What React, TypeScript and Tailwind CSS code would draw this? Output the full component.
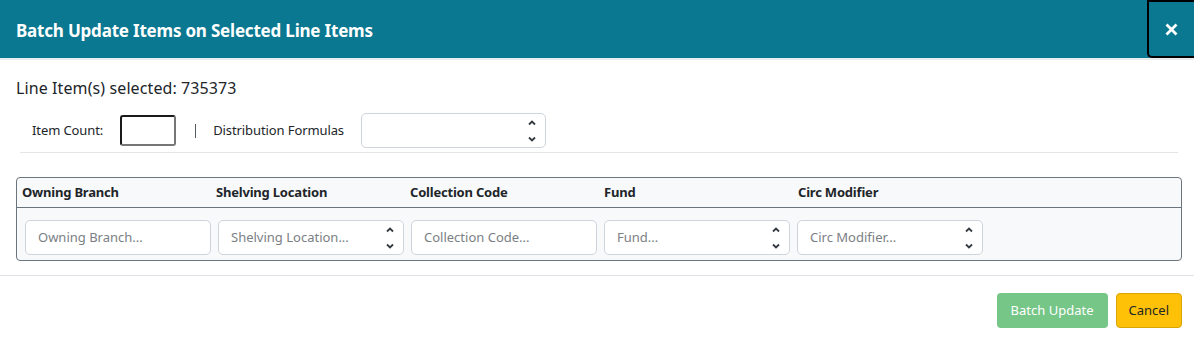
const COLUMNS = [
  { label: "Owning Branch", placeholder: "Owning Branch...", select: false },
  { label: "Shelving Location", placeholder: "Shelving Location...", select: true },
  { label: "Collection Code", placeholder: "Collection Code...", select: false },
  { label: "Fund", placeholder: "Fund...", select: true },
  { label: "Circ Modifier", placeholder: "Circ Modifier...", select: true },
];

function Chevrons() {
  return (
    <svg width="10" height="26" viewBox="0 0 10 26" className="absolute right-[8px] top-1/2 -translate-y-1/2">
      <path d="M2 6.5 L5 3.5 L8 6.5" fill="none" stroke="#343a40" strokeWidth="1.8" />
      <path d="M2 19.5 L5 22.5 L8 19.5" fill="none" stroke="#343a40" strokeWidth="1.8" />
    </svg>
  );
}

function Field({ placeholder, select }: { placeholder: string; select: boolean }) {
  return (
    <div className="relative w-[186px] h-[35px] border border-[#ced4da] rounded-[5px] bg-white flex items-center px-[12px]">
      <span className="text-[13px] text-[#7b8085]">{placeholder}</span>
      {select && <Chevrons />}
    </div>
  );
}

export default function App() {
  return (
    <div className="w-[1194px] h-[341px] bg-white text-[#212529] font-['Noto_Sans',sans-serif] overflow-hidden">
      <div className="h-[60px] bg-[#0a7891] border-b-2 border-[#e9ecef] flex items-start justify-between">
        <h1 className="pl-[16px] pt-[19px] text-[17px] font-bold text-white leading-[24px] tracking-[-0.2px]">
          Batch Update Items on Selected Line Items
        </h1>
        <button className="w-[47px] h-[58px] border-2 border-black border-r-0 rounded-bl-[5px] flex items-center justify-center text-white">
          <svg width="13" height="13" viewBox="0 0 13 13">
            <path d="M1.5 1.5 L11.5 11.5 M11.5 1.5 L1.5 11.5" stroke="white" strokeWidth="2.8" />
          </svg>
        </button>
      </div>

      <div className="px-[16px]">
        <div className="pt-[17px] text-[16px] leading-[22px] tracking-[0.1px]">Line Item(s) selected: 735373</div>
        <div className="flex items-center h-[39px] mt-[12px] pl-[16px] text-[13px] tracking-[-0.1px]">
          <span>Item Count:</span>
          <div className="ml-[17px] w-[56px] h-[31px] rounded-[3px] border-2 border-t-[#1a1a1a] border-l-[#1a1a1a] border-r-[#767676] border-b-[#767676]" />
          <div className="ml-[19px] w-[1px] h-[14px] bg-[#555a5f]" />
          <span className="ml-[17px]">Distribution Formulas</span>
          <div className="relative ml-[17px] w-[185px] h-[35px] border border-[#ced4da] rounded-[5px] bg-white">
            <Chevrons />
          </div>
        </div>
        <div className="mt-[2px] ml-[4px] border-t border-[#e3e5e8]" />

        <div className="mt-[24px] border border-[#6c757d] rounded-[4px] bg-[#f8f9fb] w-[1166px]">
          <div className="flex h-[30px] items-center border-b border-[#6c757d] px-[5px]">
            {COLUMNS.map((c) => (
              <div key={c.label} className="w-[194px] text-[13px] font-bold tracking-[-0.2px]">
                {c.label}
              </div>
            ))}
          </div>
          <div className="flex gap-[7px] pl-[8px] pt-[12px] pb-[5px]">
            {COLUMNS.map((c) => (
              <Field key={c.label} placeholder={c.placeholder} select={c.select} />
            ))}
          </div>
        </div>
      </div>

      <div className="mt-[14px] border-t border-[#dee2e6] flex justify-end gap-[8px] pr-[12px] pt-[17px]">
        <button className="h-[35px] px-[14px] rounded-[4px] bg-[#75c687] text-white text-[13px]">Batch Update</button>
        <button className="h-[35px] px-[12px] rounded-[4px] bg-[#ffc107] border border-[#d9a406] text-[#212529] text-[13px]">
          Cancel
        </button>
      </div>
    </div>
  );
}
